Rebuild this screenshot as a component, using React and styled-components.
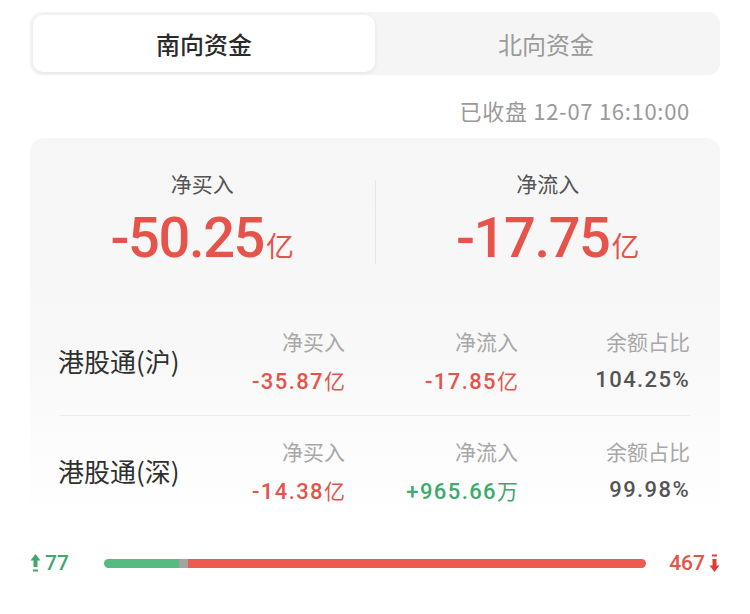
import React, { useState } from 'react';
import styled, { createGlobalStyle } from 'styled-components';

const GlobalStyle = createGlobalStyle`
  body {
    margin: 0;
    background: #fff;
    font-family: "Noto Sans CJK SC", "Noto Sans", sans-serif;
  }
`;

const RED = '#e5534b';
const GREEN = '#3fa86c';
const NUM_FONT = `Roboto, "Noto Sans CJK SC", sans-serif`;

const Page = styled.div`
  width: 750px;
  padding: 12px 30px 0;
  box-sizing: border-box;
`;

const TabBar = styled.div`
  display: grid;
  grid-template-columns: 1fr 1fr;
  height: 63px;
  padding: 3px;
  box-sizing: border-box;
  background: #f5f5f5;
  border-radius: 12px;
`;

const Tab = styled.div`
  display: flex;
  align-items: center;
  justify-content: center;
  border-radius: 10px;
  font-size: 24px;
  font-weight: ${p => (p.$active ? 500 : 400)};
  color: ${p => (p.$active ? '#2b2b2b' : '#9a9a9a')};
  background: ${p => (p.$active ? '#fff' : 'transparent')};
  box-shadow: ${p => (p.$active ? '0 1px 4px rgba(0,0,0,0.08)' : 'none')};
  cursor: pointer;
`;

const Stamp = styled.div`
  margin: 21px 30px 14px 0;
  text-align: right;
  font-size: 22px;
  line-height: 28px;
  letter-spacing: 0.7px;
  color: #9a9a9a;
`;

const Card = styled.div`
  border-radius: 14px 14px 0 0;
  background: linear-gradient(#f6f6f6 0%, #f8f8f8 55%, #fff 100%);
  padding: 30px 30px 0 30px;
`;

const Summary = styled.div`
  display: grid;
  grid-template-columns: 1fr 1px 1fr;
  align-items: center;
  margin: 0 -30px 31px;
`;

const SumCol = styled.div`
  display: flex;
  flex-direction: column;
  align-items: center;
  gap: 10px;
`;

const SumLabel = styled.div`
  font-size: 21px;
  line-height: 30px;
  color: #555;
`;

const BigValue = styled.div`
  font-family: ${NUM_FONT};
  font-size: 56px;
  font-weight: 500;
  line-height: 60px;
  letter-spacing: -1.4px;
  color: ${RED};
  span {
    font-family: "Noto Sans CJK SC", sans-serif;
    font-size: 28px;
    font-weight: 400;
    letter-spacing: 0;
    margin-left: 2px;
  }
`;

const VDivider = styled.div`
  width: 1px;
  height: 84px;
  background: #e6e6e6;
`;

const Row = styled.div`
  display: grid;
  grid-template-columns: 1fr 150px 173px 172px;
  grid-template-rows: 30px 30px;
  row-gap: 9px;
  padding: 20px 0;
  border-top: ${p => (p.$first ? 'none' : '1px solid #ececec')};
`;

const Name = styled.div`
  grid-row: 1 / span 2;
  align-self: center;
  margin-left: -2px;
  font-size: 26px;
  line-height: 36px;
  color: #2f2f2f;
  white-space: nowrap;
`;

const ColLabel = styled.div`
  grid-row: 1;
  text-align: right;
  font-size: 21px;
  line-height: 30px;
  color: #a8a8a8;
`;

const ColValue = styled.div`
  grid-row: 2;
  text-align: right;
  font-family: ${NUM_FONT};
  font-size: 22px;
  font-weight: 500;
  line-height: 30px;
  letter-spacing: 1.4px;
  color: ${p => p.$color};
  span {
    font-family: "Noto Sans CJK SC", sans-serif;
    font-size: 21px;
    font-weight: 400;
    letter-spacing: 0;
  }
`;

const Breadth = styled.div`
  display: flex;
  align-items: center;
  height: 30px;
  margin-top: 23px;
`;

const Count = styled.div`
  display: flex;
  align-items: center;
  gap: 4px;
  font-family: ${NUM_FONT};
  font-size: 21px;
  font-weight: 500;
  color: ${p => p.$color};
  width: ${p => p.$w}px;
  justify-content: ${p => (p.$right ? 'flex-end' : 'flex-start')};
`;

const Bar = styled.div`
  flex: 1;
  display: flex;
  height: 9px;
  margin: 0 20px 0 34px;
  border-radius: 5px;
  overflow: hidden;
`;

const Seg = styled.div`
  flex: ${p => p.$n};
  background: ${p => p.$color};
`;

const UpArrow = () => (
  <svg width="11" height="20" viewBox="0 0 11 20">
    <path d="M5.5 1 L10.5 7.5 L7.5 7.5 L7.5 14 L3.5 14 L3.5 7.5 L0.5 7.5 Z" fill={GREEN} />
    <rect x="3" y="16.5" width="5" height="2" fill={GREEN} />
  </svg>
);

const DownArrow = () => (
  <svg width="11" height="20" viewBox="0 0 11 20">
    <rect x="3" y="1.5" width="5" height="2" fill="#e03c36" />
    <path d="M5.5 19 L10.5 12.5 L7.5 12.5 L7.5 6 L3.5 6 L3.5 12.5 L0.5 12.5 Z" fill="#e03c36" />
  </svg>
);

const rows = [
  { name: '港股通(沪)', buy: ['-35.87', '亿', RED], flow: ['-17.85', '亿', RED], ratio: '104.25' },
  { name: '港股通(深)', buy: ['-14.38', '亿', RED], flow: ['+965.66', '万', GREEN], ratio: '99.98' },
];

export default function App() {
  const [tab, setTab] = useState(0);
  const up = 77, flat = 9, down = 467;
  return (
    <Page>
      <GlobalStyle />
      <TabBar>
        <Tab $active={tab === 0} onClick={() => setTab(0)}>南向资金</Tab>
        <Tab $active={tab === 1} onClick={() => setTab(1)}>北向资金</Tab>
      </TabBar>
      <Stamp>已收盘 12-07 16:10:00</Stamp>
      <Card>
        <Summary>
          <SumCol>
            <SumLabel>净买入</SumLabel>
            <BigValue>-50.25<span>亿</span></BigValue>
          </SumCol>
          <VDivider />
          <SumCol>
            <SumLabel>净流入</SumLabel>
            <BigValue>-17.75<span>亿</span></BigValue>
          </SumCol>
        </Summary>
        {rows.map((r, i) => (
          <Row key={r.name} $first={i === 0}>
            <Name>{r.name}</Name>
            <ColLabel>净买入</ColLabel>
            <ColLabel>净流入</ColLabel>
            <ColLabel>余额占比</ColLabel>
            <ColValue $color={r.buy[2]}>{r.buy[0]}<span>{r.buy[1]}</span></ColValue>
            <ColValue $color={r.flow[2]}>{r.flow[0]}<span>{r.flow[1]}</span></ColValue>
            <ColValue $color="#555">{r.ratio}%</ColValue>
          </Row>
        ))}
      </Card>
      <Breadth>
        <Count $color={GREEN} $w={40}><UpArrow />{up}</Count>
        <Bar>
          <Seg $n={up} $color="#55bb80" />
          <Seg $n={flat} $color="#a3a3a3" />
          <Seg $n={down} $color="#ee5a4f" />
        </Bar>
        <Count $color={RED} $w={54} $right>{down}<DownArrow /></Count>
      </Breadth>
    </Page>
  );
}
